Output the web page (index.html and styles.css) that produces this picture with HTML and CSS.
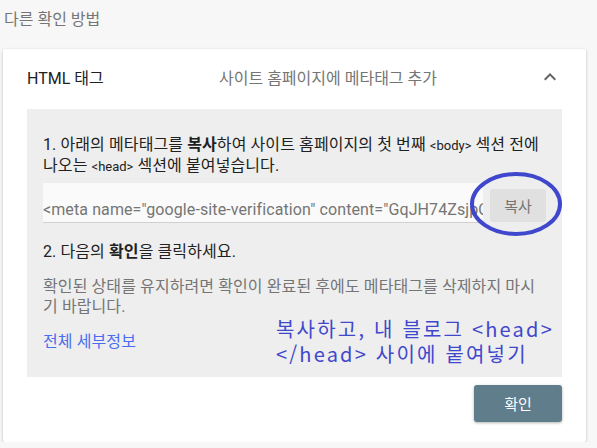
FILE: index.html
```html
<!DOCTYPE html>
<html lang="ko">
<head>
    <meta charset="UTF-8">
    <meta name="viewport" content="width=device-width, initial-scale=1.0">
    <title>다른 확인 방법</title>
    <link rel="stylesheet" href="styles.css">
</head>
<body>

<div class="page-title">다른 확인 방법</div>

<div class="card">
    <div class="card-head">
        <div class="method-name">HTML 태그</div>
        <div class="method-desc">사이트 홈페이지에 메타태그 추가</div>
        <svg class="chevron" width="24" height="24" viewBox="0 0 24 24">
            <path d="M12 8l-6 6 1.41 1.41L12 10.83l4.59 4.58L18 14z" fill="#616161"/>
        </svg>
    </div>

    <div class="panel">
        <p class="step">1. 아래의 메타태그를 <b>복사</b>하여 사이트 홈페이지의 첫 번째 <code>&lt;body&gt;</code> 섹션 전에 나오는 <code>&lt;head&gt;</code> 섹션에 붙여넣습니다.</p>

        <div class="copy-row">
            <div class="meta-field">&lt;meta name="google-site-verification" content="GqJH74ZsjpQ2" /&gt;</div>
            <button class="copy-button">복사</button>
        </div>

        <p class="step step-two">2. 다음의 <b>확인</b>을 클릭하세요.</p>
        <p class="note">확인된 상태를 유지하려면 확인이 완료된 후에도 메타태그를 삭제하지 마시기 바랍니다.</p>
        <a class="details-link" href="#">전체 세부정보</a>

        <!-- annotation -->
        <svg class="mark-circle" width="96" height="68" viewBox="0 0 96 68">
            <ellipse cx="48" cy="34" rx="44" ry="30" fill="none" stroke="#3f48cc" stroke-width="4"/>
        </svg>
        <div class="mark-note">복사하고, 내 블로그 &lt;head&gt;<br>&lt;/head&gt; 사이에 붙여넣기</div>
    </div>

    <div class="card-foot">
        <button class="confirm-button">확인</button>
    </div>
</div>

</body>
</html>
```

FILE: styles.css
```css
body {
    margin: 0;
    background-color: #f7f7f7;
    font-family: Roboto, "Noto Sans CJK KR", sans-serif;
    color: #212121;
}
.page-title {
    padding: 10px 4px 0;
    height: 39px;
    font-size: 16px;
    line-height: 20px;
    color: #757575;
}
.card {
    margin: 0 11px 0 3px;
    background-color: #fff;
    border-radius: 2px;
    box-shadow: 0 1px 3px rgba(0, 0, 0, 0.25);
    padding-bottom: 20px;
}
.card-head {
    display: flex;
    align-items: center;
    height: 56px;
    padding: 0 24px;
    margin-bottom: 4px;
    font-size: 16px;
}
.method-name {
    width: 192px;
    color: #212121;
}
.method-desc {
    flex: 1;
    color: #757575;
}
.chevron {
    display: block;
}
.panel {
    position: relative;
    margin: 0 24px;
    padding: 26px 16px 25px 16px;
    background-color: #eeeeee;
    font-size: 16px;
    line-height: 20px;
    letter-spacing: 0.1px;
}
.panel p {
    margin: 0;
}
.step {
    word-break: keep-all;
}
.step code {
    font-family: Roboto, sans-serif;
    font-size: 13px;
    letter-spacing: 0;
}
.copy-row {
    display: flex;
    align-items: center;
    gap: 7px;
    margin-top: 6px;
}
.meta-field {
    flex: 1;
    height: 40px;
    box-sizing: border-box;
    padding: 17px 0 0 0;
    background-color: #fafafa;
    border-bottom: 1px solid #d0d0d0;
    font-size: 16px;
    letter-spacing: 0.1px;
    color: #757575;
    white-space: nowrap;
    overflow: hidden;
}
.copy-button {
    width: 56px;
    height: 33px;
    margin-top: 4px;
    background-color: #e0e0e0;
    color: #757575;
    border: none;
    border-radius: 3px;
    font-family: Roboto, "Noto Sans CJK KR", sans-serif;
    font-size: 15px;
}
.step-two {
    margin-top: 19px !important;
}
.note {
    margin-top: 15px !important;
    color: #757575;
    word-break: break-all;
}
.details-link {
    display: inline-block;
    margin-top: 15px;
    color: #4a6cf0;
    text-decoration: none;
}
.mark-circle {
    position: absolute;
    left: 441px;
    top: 61px;
}
.mark-note {
    position: absolute;
    left: 249px;
    top: 207px;
    font-family: "Noto Sans CJK KR", sans-serif;
    font-size: 20px;
    line-height: 25px;
    letter-spacing: 2.2px;
    color: #3f48cc;
}
.card-foot {
    display: flex;
    justify-content: flex-end;
    padding: 8px 24px 0;
}
.confirm-button {
    width: 88px;
    height: 37px;
    background-color: #607d8b;
    color: #fff;
    border: none;
    border-radius: 3px;
    box-shadow: 0 1px 3px rgba(0, 0, 0, 0.3);
    font-family: Roboto, "Noto Sans CJK KR", sans-serif;
    font-size: 15px;
}
```
